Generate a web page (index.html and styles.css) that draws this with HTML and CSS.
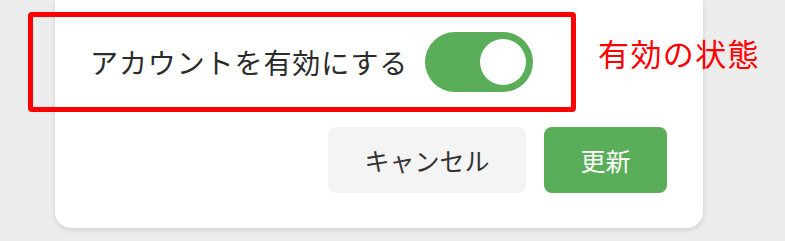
FILE: index.html
```html
<!DOCTYPE html>
<html lang="ja">
<head>
<meta charset="utf-8">
<link rel="stylesheet" href="styles.css">
</head>
<body>
<div class="card">
  <div class="setting">
    <div class="highlight">
      <span class="label">アカウントを有効にする</span>
      <span class="toggle"><span class="knob"></span></span>
    </div>
    <span class="note">有効の状態</span>
  </div>
  <div class="actions">
    <button class="btn btn-cancel">キャンセル</button>
    <button class="btn btn-primary">更新</button>
  </div>
</div>
</body>
</html>
```

FILE: styles.css
```css
html, body {
  margin: 0;
  padding: 0;
}
body {
  background: #ececec;
  font-family: "Noto Sans CJK JP", "Noto Sans", sans-serif;
  width: 785px;
  height: 241px;
  overflow: hidden;
}
.card {
  margin-left: 55px;
  width: 648px;
  height: 228px;
  box-sizing: border-box;
  background: #ffffff;
  border-radius: 0 0 16px 16px;
  box-shadow: 0 2px 5px rgba(0, 0, 0, 0.12);
  padding-top: 12px;
}
.setting {
  display: flex;
  align-items: center;
  margin-left: -27px;
}
.highlight {
  flex-shrink: 0;
  box-sizing: border-box;
  width: 548px;
  height: 100px;
  border: 5px solid #ff0000;
  border-radius: 4px;
  display: flex;
  align-items: center;
  padding-left: 57px;
  gap: 17px;
}
.label {
  font-size: 28px;
  letter-spacing: 0.9px;
  color: #2b2b2b;
  line-height: 1;
  white-space: nowrap;
}
.toggle {
  position: relative;
  display: block;
  flex-shrink: 0;
  width: 108px;
  height: 60px;
  border-radius: 30px;
  background: #5aae5a;
}
.knob {
  position: absolute;
  right: 7px;
  top: 7px;
  width: 46px;
  height: 46px;
  border-radius: 50%;
  background: #ffffff;
}
.note {
  flex-shrink: 0;
  white-space: nowrap;
  margin-left: 22px;
  font-size: 31px;
  letter-spacing: 1.4px;
  line-height: 1;
  color: #ff0000;
  align-self: flex-start;
  margin-top: 25px;
}
.actions {
  display: flex;
  justify-content: flex-end;
  gap: 18px;
  padding-right: 36px;
  margin-top: 15px;
}
.btn {
  font-family: "Noto Sans CJK JP", "Noto Sans", sans-serif;
  height: 66px;
  border: none;
  border-radius: 8px;
  font-size: 25px;
  padding: 0;
  line-height: 1;
}
.btn-cancel {
  width: 198px;
  background: #f4f4f4;
  color: #333333;
}
.btn-primary {
  width: 123px;
  background: #5aae5a;
  color: #ffffff;
}
```
